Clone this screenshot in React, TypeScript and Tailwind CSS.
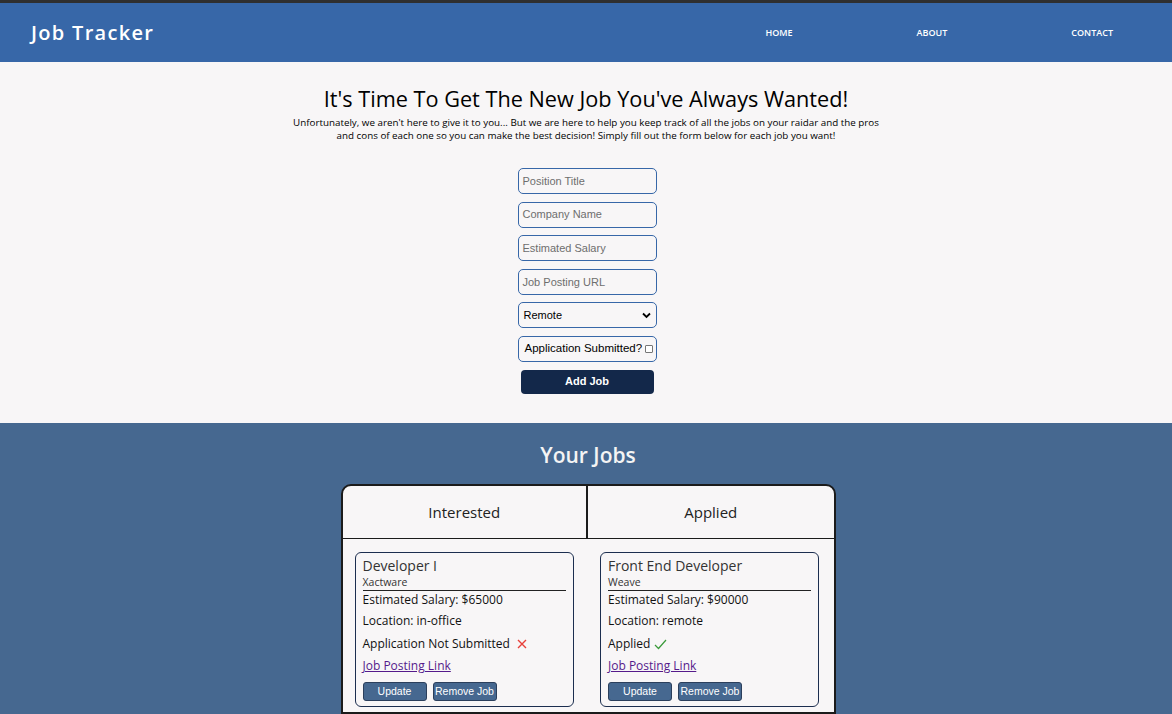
import React from "react";

const OS = { fontFamily: '"Open Sans", "Noto Sans", sans-serif' };
const AR = { fontFamily: '"Liberation Sans", Arial, sans-serif' };

function Input({ placeholder }: { placeholder: string }) {
  return (
    <div
      className="w-[139px] h-[26px] rounded-[5px] border border-[#3767a8] bg-[#f8f6f7] flex items-center pl-[4px] text-[11px] text-[#6e6e6e]"
      style={AR}
    >
      {placeholder}
    </div>
  );
}

function Card({
  title,
  company,
  salary,
  location,
  applied,
}: {
  title: string;
  company: string;
  salary: string;
  location: string;
  applied: boolean;
}) {
  return (
    <div className="w-[219px] rounded-[6px] border border-[#1c2e4f] px-[7px] pt-[3px] pb-[5px]" style={OS}>
      <div className="border-b border-[#222] pb-[1px]">
        <div className="text-[14px] leading-[19px] text-[#333]">{title}</div>
        <div className="text-[10.5px] leading-[14px] text-[#333]">{company}</div>
      </div>
      <div className="text-[12px] leading-[16px] text-[#111] mt-[1px]">Estimated Salary: {salary}</div>
      <div className="text-[12px] leading-[16px] text-[#111] mt-[5px]">Location: {location}</div>
      <div className="text-[12px] leading-[16px] text-[#111] mt-[7px] flex items-center">
        {applied ? (
          <>
            Applied
            <svg width="13" height="11" viewBox="0 0 13 11" className="ml-[4px]">
              <path d="M1 6 L4.5 9.5 L12 1" stroke="#3a9a3a" strokeWidth="1.2" fill="none" />
            </svg>
          </>
        ) : (
          <>
            Application Not Submitted
            <svg width="10" height="10" viewBox="0 0 10 10" className="ml-[7px]">
              <path d="M1 1 L9 9 M9 1 L1 9" stroke="#e8403a" strokeWidth="1.4" fill="none" />
            </svg>
          </>
        )}
      </div>
      <div className="text-[12px] leading-[16px] mt-[6px]">
        <a className="text-[#551a8b] underline">Job Posting Link</a>
      </div>
      <div className="flex gap-[6px] mt-[8px]">
        <button
          className="w-[64px] h-[19px] rounded-[3px] bg-[#466890] border border-[#2b3f5c] text-white text-[10.5px] flex items-center justify-center"
          style={AR}
        >
          Update
        </button>
        <button
          className="w-[64px] h-[19px] rounded-[3px] bg-[#466890] border border-[#2b3f5c] text-white text-[10.5px] flex items-center justify-center"
          style={AR}
        >
          Remove Job
        </button>
      </div>
    </div>
  );
}

export default function App() {
  return (
    <div className="w-[1172px] h-[714px] overflow-hidden bg-[#f8f6f7]" style={OS}>
      <header className="h-[62px] border-t-[3px] border-[#2f2f2f] bg-[#3767a8] flex items-center justify-between">
        <div className="pl-[31px] text-[20px] font-semibold tracking-[1.3px] text-white">Job Tracker</div>
        <nav className="flex gap-[124px] pr-[59px] text-[9px] font-semibold text-white">
          <span>HOME</span>
          <span>ABOUT</span>
          <span>CONTACT</span>
        </nav>
      </header>

      <section className="h-[361px] flex flex-col items-center">
        <h1 className="mt-[23px] text-[21.7px] leading-[28px] text-black">
          It's Time To Get The New Job You've Always Wanted!
        </h1>
        <p className="text-[9.8px] leading-[13px] text-black text-center mt-[3px]">
          <span className="block whitespace-nowrap">
            Unfortunately, we aren't here to give it to you... But we are here to help you keep track of all the jobs on your raidar and the pros
          </span>
          <span className="block whitespace-nowrap">
            and cons of each one so you can make the best decision! Simply fill out the form below for each job you want!
          </span>
        </p>
        <div className="mt-[26px] ml-[2px] flex flex-col gap-[7.6px] items-center">
          <Input placeholder="Position Title" />
          <Input placeholder="Company Name" />
          <Input placeholder="Estimated Salary" />
          <Input placeholder="Job Posting URL" />
          <div
            className="w-[139px] h-[26px] rounded-[5px] border border-[#3767a8] flex items-center justify-between pl-[5px] pr-[5px] text-[11px] text-black"
            style={AR}
          >
            <span>Remote</span>
            <svg width="9" height="7" viewBox="0 0 9 7">
              <path d="M1 1.5 L4.5 5 L8 1.5" stroke="#000" strokeWidth="1.8" fill="none" />
            </svg>
          </div>
          <div
            className="w-[139px] h-[26px] rounded-[5px] border border-[#3767a8] flex items-center pl-[6px] text-[11.5px] text-black"
            style={AR}
          >
            <span>Application Submitted?</span>
            <span className="ml-[3px] w-[8px] h-[8px] border border-[#767676] rounded-[1px] bg-white" />
          </div>
          <button
            className="w-[133px] h-[24px] rounded-[4px] bg-[#13284a] text-white text-[11px] font-bold flex items-center justify-center"
            style={AR}
          >
            Add Job
          </button>
        </div>
      </section>

      <section className="h-[291px] bg-[#466890] flex flex-col items-center">
        <h2 className="mt-[18px] ml-[4px] text-[21px] leading-[28px] font-semibold text-[#f4f4f4]">Your Jobs</h2>
        <div className="mt-[15px] ml-[4px] w-[495px] h-[300px] border-2 border-[#1b1b1b] rounded-t-[10px] bg-[#f8f6f7]">
          <div className="grid grid-cols-2 h-[53px] border-b border-[#1b1b1b]">
            <div className="flex items-center justify-center border-r-2 border-[#1b1b1b] text-[15px] text-[#222]">
              Interested
            </div>
            <div className="flex items-center justify-center text-[15px] text-[#222]">Applied</div>
          </div>
          <div className="grid grid-cols-2 pt-[13px]">
            <div className="pl-[12px]">
              <Card title="Developer I" company="Xactware" salary="$65000" location="in-office" applied={false} />
            </div>
            <div className="pl-[12px]">
              <Card title="Front End Developer" company="Weave" salary="$90000" location="remote" applied={true} />
            </div>
          </div>
        </div>
      </section>
    </div>
  );
}
